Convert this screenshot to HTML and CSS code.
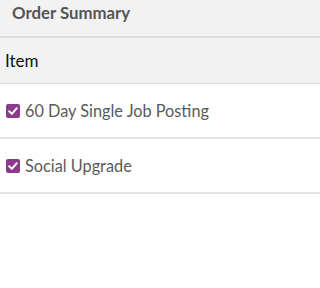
FILE: index.html
```html
<!DOCTYPE html>
<html>
<head>
<meta charset="utf-8">
<link rel="stylesheet" href="styles.css">
</head>
<body>
<div class="summary">
  <div class="title">Order Summary</div>
  <div class="head-row">Item</div>
  <div class="row">
    <span class="check"><svg viewBox="0 0 14 14" width="14" height="14"><path d="M3.2 7.2 L5.9 9.9 L10.8 4.2" fill="none" stroke="#fff" stroke-width="2" stroke-linecap="round" stroke-linejoin="round"/></svg></span>
    <span class="label">60 Day Single Job Posting</span>
  </div>
  <div class="row">
    <span class="check"><svg viewBox="0 0 14 14" width="14" height="14"><path d="M3.2 7.2 L5.9 9.9 L10.8 4.2" fill="none" stroke="#fff" stroke-width="2" stroke-linecap="round" stroke-linejoin="round"/></svg></span>
    <span class="label">Social Upgrade</span>
  </div>
</div>
</body>
</html>
```
FILE: styles.css
```css
html, body {
  margin: 0;
  padding: 0;
  background: #fff;
}
body {
  font-family: Lato, "Noto Sans", sans-serif;
}
.title {
  background: #f2f2f2;
  color: #555;
  font-weight: bold;
  font-size: 16.8px;
  line-height: 26px;
  padding-left: 12px;
  border-bottom: 2px solid #dcdcdc;
  box-sizing: border-box;
  height: 38px;
}
.head-row {
  background: #f2f2f2;
  color: #111;
  font-size: 17px;
  height: 45px;
  line-height: 46px;
  padding-left: 5px;
  border-bottom: 1px solid #dcdcdc;
}
.row {
  display: flex;
  align-items: center;
  height: 53px;
  border-bottom: 2px solid #e2e2e2;
  padding-left: 6px;
  gap: 5px;
}
.check {
  display: flex;
  width: 14px;
  height: 14px;
  border-radius: 2px;
  background: #8d3a8c;
}
.label {
  color: #5a5a5a;
  font-size: 16.3px;
}
```
